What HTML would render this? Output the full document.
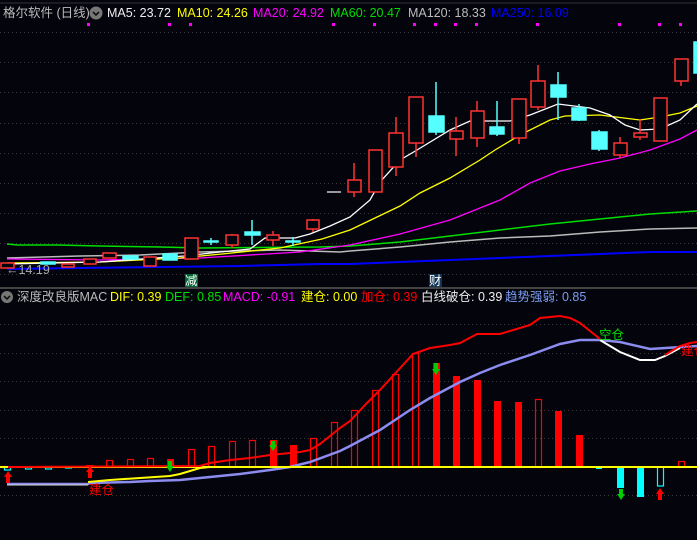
<!DOCTYPE html>
<html><head><meta charset="utf-8"><style>
html,body{margin:0;padding:0;background:#04040c;width:697px;height:540px;overflow:hidden}
svg{display:block}
text{font-family:"Liberation Sans","Noto Sans CJK SC",sans-serif;font-size:12.5px}
</style></head><body>
<svg width="697" height="540" viewBox="0 0 697 540" xmlns="http://www.w3.org/2000/svg">
<rect width="697" height="540" fill="#04040c"/>
<line x1="0" y1="3" x2="697" y2="3" stroke="#333" stroke-width="1"/>
<g stroke="#3a3a3a" stroke-width="1" stroke-dasharray="1,3">
<line x1="0" y1="32.5" x2="697" y2="32.5"/><line x1="0" y1="62.5" x2="697" y2="62.5"/><line x1="0" y1="92.5" x2="697" y2="92.5"/><line x1="0" y1="123.5" x2="697" y2="123.5"/><line x1="0" y1="153.5" x2="697" y2="153.5"/><line x1="0" y1="183.5" x2="697" y2="183.5"/><line x1="0" y1="213.5" x2="697" y2="213.5"/><line x1="0" y1="243.5" x2="697" y2="243.5"/><line x1="0" y1="274.5" x2="697" y2="274.5"/>
<line x1="0" y1="324.5" x2="697" y2="324.5"/><line x1="0" y1="353.5" x2="697" y2="353.5"/><line x1="0" y1="381.5" x2="697" y2="381.5"/><line x1="0" y1="410.5" x2="697" y2="410.5"/><line x1="0" y1="438.5" x2="697" y2="438.5"/><line x1="0" y1="495.5" x2="697" y2="495.5"/>
</g>
<line x1="0" y1="288" x2="697" y2="288" stroke="#444" stroke-width="2"/>
<!-- header -->
<text x="3" y="17" fill="#bbb">格尔软件 (日线)</text>
<circle cx="96" cy="13" r="6.5" fill="#777"/><path d="M93 12l3 3 3-3" stroke="#111" stroke-width="1.6" fill="none"/>
<text x="107" y="17" fill="#eee">MA5: 23.72</text>
<text x="177" y="17" fill="#ff0">MA10: 24.26</text>
<text x="253" y="17" fill="#f0f">MA20: 24.92</text>
<text x="330" y="17" fill="#0d0">MA60: 20.47</text>
<text x="408" y="17" fill="#bbb">MA120: 18.33</text>
<text x="491" y="17" fill="#00f">MA250: 16.09</text>
<g fill="#f0f">
<rect x="87" y="23" width="3" height="3"/><rect x="168" y="23" width="3" height="3"/><rect x="189" y="23" width="3" height="3"/><rect x="332" y="23" width="3" height="3"/><rect x="373" y="23" width="3" height="3"/><rect x="413" y="23" width="3" height="3"/><rect x="434" y="23" width="3" height="3"/><rect x="454" y="23" width="3" height="3"/><rect x="475" y="23" width="3" height="3"/><rect x="536" y="23" width="3" height="3"/><rect x="618" y="23" width="3" height="3"/><rect x="658" y="23" width="3" height="3"/><rect x="679" y="23" width="3" height="3"/>
</g>
<!-- MA lines -->
<g fill="none" stroke-width="1.3">
<polyline stroke="#0d0" stroke-width="1.5" points="7,244 18,245 58,245 100,246 160,247 200,248 320,247 350,246 400,242 450,236 500,230 550,224 600,219 650,214 697,211"/>
<polyline stroke="#bbb" stroke-width="1.5" points="7,258 80,256 140,255 200,252 280,250 340,252 350,251 400,247 450,242 500,238 550,236 600,232 650,229 697,228"/>
<polyline stroke="#00f" stroke-width="2" points="7,269 80,268 160,267 240,266 320,264 350,264 400,262 450,260 500,258 550,256 600,254 650,252 697,252"/>
<polyline stroke="#f0f" points="7,259 100,260 200,258 300,252 350,245 400,234 450,220 500,200 530,183 560,171 590,164 620,158 650,150 680,139 697,130"/>
<polyline stroke="#ff0" points="7,263 100,262 180,258 222,254 280,248 322,239 350,230 400,206 420,193 450,178 480,160 495,150 520,135 550,120 565,116 600,115 640,120 660,117 680,113 697,106"/>
<polyline stroke="#fff" points="7,264 100,262 184,256 220,252 250,249 265,238 295,238 310,234 330,226 350,217 370,200 380,182 400,160 417,150 450,130 470,121 510,121 530,115 558,104 590,108 610,115 625,125 640,130 660,129 680,120 697,104"/>
</g>
<!-- candles -->
<g stroke="#f33" stroke-width="1.5" fill="#04040c">
<rect x="1" y="263" width="13" height="5"/><rect x="62" y="264" width="12" height="3"/><rect x="84" y="259" width="12" height="5"/><rect x="103" y="253" width="13" height="5"/><rect x="144" y="257" width="12" height="9"/><rect x="185" y="238" width="13" height="21"/>
<line x1="232" y1="234" x2="232" y2="248"/><rect x="226" y="235" width="12" height="10"/>
<line x1="273" y1="231" x2="273" y2="246"/><rect x="267" y="235" width="12" height="5"/>
<line x1="313" y1="219" x2="313" y2="232"/><rect x="307" y="220" width="12" height="9"/>
<line x1="354" y1="163" x2="354" y2="197"/><rect x="348" y="180" width="13" height="12"/>
<rect x="369" y="150" width="13" height="42"/>
<line x1="396" y1="117" x2="396" y2="176"/><rect x="389" y="133" width="14" height="34"/>
<line x1="416" y1="97" x2="416" y2="157"/><rect x="409" y="97" width="14" height="46"/>
<line x1="456" y1="117" x2="456" y2="156"/><rect x="450" y="131" width="13" height="8"/>
<line x1="477" y1="101" x2="477" y2="147"/><rect x="471" y="111" width="13" height="27"/>
<line x1="519" y1="99" x2="519" y2="144"/><rect x="512" y="99" width="14" height="39"/>
<line x1="538" y1="65" x2="538" y2="110"/><rect x="531" y="81" width="14" height="26"/>
<line x1="620" y1="137" x2="620" y2="158"/><rect x="614" y="143" width="13" height="12"/>
<line x1="640" y1="119" x2="640" y2="140"/><rect x="634" y="133" width="13" height="4"/>
<rect x="654" y="98" width="13" height="43"/>
<line x1="681" y1="81" x2="681" y2="86"/><rect x="675" y="59" width="13" height="22"/>
</g>
<g fill="#5ff" stroke="#5ff" stroke-width="1.5">
<rect x="41" y="262" width="14" height="2"/><rect x="123" y="256" width="15" height="3"/><rect x="163" y="254" width="14" height="6"/>
<line x1="211" y1="238" x2="211" y2="245"/><rect x="204" y="241" width="14" height="1"/>
<line x1="252" y1="220" x2="252" y2="245"/><rect x="245" y="232" width="15" height="3"/>
<line x1="293" y1="237" x2="293" y2="246"/><rect x="286" y="241" width="14" height="1"/>
<line x1="436" y1="82" x2="436" y2="135"/><rect x="429" y="116" width="15" height="16"/>
<line x1="497" y1="101" x2="497" y2="136"/><rect x="490" y="127" width="14" height="7"/>
<line x1="558" y1="72" x2="558" y2="120"/><rect x="551" y="85" width="15" height="12"/>
<line x1="579" y1="104" x2="579" y2="121"/><rect x="572" y="108" width="14" height="12"/>
<line x1="599" y1="130" x2="599" y2="151"/><rect x="592" y="132" width="15" height="17"/>
<rect x="694" y="42" width="4" height="31"/>
</g>
<line x1="327" y1="192" x2="341" y2="192" stroke="#ccc" stroke-width="1.5"/>
<text x="6" y="274" fill="#aaa">←14.19</text>
<rect x="185" y="274" width="13" height="13" fill="#063"/><text x="185" y="285" fill="#fff" font-size="12">减</text>
<rect x="429" y="274" width="13" height="13" fill="#135"/><text x="429" y="285" fill="#fff" font-size="12">财</text>
<!-- lower header -->
<circle cx="7" cy="297" r="6" fill="#777"/><path d="M4 296l3 3 3-3" stroke="#111" stroke-width="1.6" fill="none"/>
<text x="17" y="301" fill="#bbb">深度改良版MAC</text>
<text x="110" y="301" fill="#ff0">DIF: 0.39</text>
<text x="165" y="301" fill="#0d0">DEF: 0.85</text>
<text x="223" y="301" fill="#f0f">MACD: -0.91</text>
<text x="301" y="301" fill="#ff0">建仓: 0.00</text>
<text x="361" y="301" fill="#f00">加仓: 0.39</text>
<text x="421" y="301" fill="#eee">白线破仓: 0.39</text>
<text x="505" y="301" fill="#7a9cf0">趋势强弱: 0.85</text>
<!-- histogram -->
<g stroke="#f00" stroke-width="1.2" fill="none">
<rect x="106.5" y="460.5" width="6" height="7"/><rect x="127.5" y="459.5" width="6" height="8"/><rect x="147.5" y="458.5" width="6" height="9"/><rect x="188.5" y="449.5" width="6" height="18"/><rect x="208.5" y="446.5" width="6" height="21"/><rect x="229.5" y="441.5" width="6" height="26"/><rect x="249.5" y="440.5" width="6" height="27"/><rect x="310.5" y="438.5" width="6" height="29"/><rect x="331.5" y="422.5" width="6" height="45"/><rect x="351.5" y="410.5" width="6" height="57"/><rect x="372.5" y="390.5" width="6" height="77"/><rect x="392.5" y="374.5" width="6" height="93"/><rect x="412.5" y="353.5" width="6" height="114"/><rect x="535.5" y="399.5" width="6" height="68"/><rect x="678.5" y="461.5" width="6" height="6"/>
</g>
<g fill="#f00">
<rect x="86" y="465" width="7" height="2"/><rect x="167" y="459" width="7" height="8"/><rect x="270" y="440" width="7" height="27"/><rect x="290" y="445" width="7" height="22"/><rect x="433" y="363" width="7" height="104"/><rect x="453" y="376" width="7" height="91"/><rect x="474" y="380" width="7" height="87"/><rect x="494" y="401" width="7" height="66"/><rect x="515" y="402" width="7" height="65"/><rect x="555" y="411" width="7" height="56"/><rect x="576" y="435" width="7" height="32"/>
</g>
<g fill="#0ff">
<rect x="596" y="467" width="6" height="2"/><rect x="617" y="467" width="7" height="21"/><rect x="637" y="467" width="7" height="30"/>
</g>
<g stroke="#0ff" stroke-width="1.2" fill="none">
<rect x="4.5" y="467" width="6" height="3"/><rect x="25.5" y="467" width="6" height="2"/><rect x="45.5" y="467" width="6" height="2"/><rect x="65.5" y="467" width="6" height="1"/><rect x="657.5" y="467" width="6" height="19"/>
</g>
<!-- lines -->
<polyline fill="none" stroke="#8c8cf0" stroke-width="2.5" points="7,484 88,484 90,483 130,482 150,481 180,480 200,478 240,474 270,470 290,467 310,462 340,451 350,446 380,430 410,410 430,398 460,382 480,373 500,365 530,355 560,344 580,340 600,340 620,342 650,349 697,346"/>
<line x1="7" y1="485" x2="88" y2="485" stroke="#ddd" stroke-width="1"/>
<polyline fill="none" stroke="#ff0" stroke-width="2" points="88,482 110,480 140,478 170,476 180,474 200,468 210,467"/>
<line x1="0" y1="467" x2="697" y2="467" stroke="#ff0" stroke-width="2"/>
<polyline fill="none" stroke="#f00" stroke-width="2" points="8,467 200,466 210,463 230,460 250,458 270,455 300,452 310,450 320,444 340,428 350,421 367,403 380,390 413,354 430,348 450,345 460,343 477,334 500,334 510,331 530,325 540,318 560,316 570,318 580,323 590,331 600,339"/>
<polyline fill="none" stroke="#fff" stroke-width="2" points="600,340 610,346 620,352 640,360 655,360 665,356 680,348"/>
<polyline fill="none" stroke="#f00" stroke-width="2" points="665,355 670,352 680,346 690,343 697,342"/>
<!-- arrows -->
<g fill="#f00"><path d="M4 477l4-6 4 6h-2v6h-4v-6z"/><path d="M86 472l4-6 4 6h-2v6h-4v-6z"/><path d="M656 494l4-6 4 6h-2v6h-4v-6z"/></g>
<g fill="#0c0"><path d="M166 466l4 6 4-6h-2v-5h-4v5z"/><path d="M269 445l4 6 4-6h-2v-4h-4v4z"/><path d="M432 369l4 6 4-6h-2v-6h-4v6z"/><path d="M617 494l4 6 4-6h-2v-5h-4v5z"/></g>
<text x="89" y="494" fill="#f00" font-size="12">建仓</text>
<text x="599" y="339" fill="#0d0" font-size="12">空仓</text>
<text x="681" y="355" fill="#f00" font-size="12">建仓</text>
</svg>
</body></html>
